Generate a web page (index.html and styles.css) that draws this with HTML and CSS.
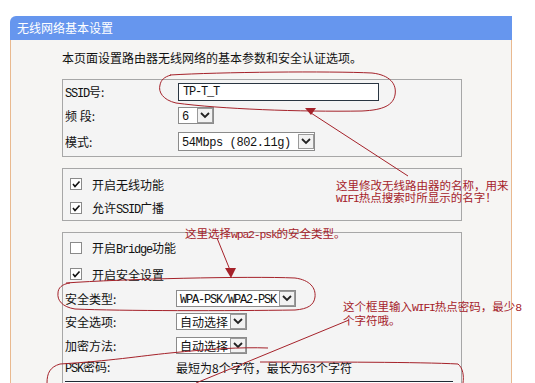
FILE: index.html
```html
<!DOCTYPE html>
<html lang="zh-CN">
<head>
<meta charset="utf-8">
<title>无线网络基本设置</title>
<link rel="stylesheet" href="styles.css">
</head>
<body>
<div class="page">
  <div class="panel">
    <div class="head">无线网络基本设置</div>
    <div class="body">
      <p class="intro">本页面设置路由器无线网络的基本参数和安全认证选项。</p>

      <div class="box b1">
        <div class="row h20">
          <span class="lbl"><span class="m">SSID</span>号:</span>
          <span class="input ssid"><span class="m">TP-T_T</span></span>
        </div>
        <div class="row h26">
          <span class="lbl">频 段:</span>
          <span class="sel w36"><span class="val"><span class="m">6</span></span><span class="btn"><svg viewBox="0 0 10 8" width="10" height="8"><path d="M1 2 L5 6 L9 2" fill="none" stroke="#222" stroke-width="1.8"/></svg></span></span>
        </div>
        <div class="row h26">
          <span class="lbl">模式:</span>
          <span class="sel w137 tall"><span class="val"><span class="m wide">54Mbps (802.11g)</span></span><span class="btn"><svg viewBox="0 0 10 8" width="10" height="8"><path d="M1 2 L5 6 L9 2" fill="none" stroke="#222" stroke-width="1.8"/></svg></span></span>
        </div>
      </div>

      <div class="box b2">
        <div class="row h24 chk">
          <span class="cb on"><svg viewBox="0 0 10 10" width="10" height="10"><path d="M2 5 L4 7.5 L8.5 2.5" fill="none" stroke="#111" stroke-width="1.6"/></svg></span>
          <span>开启无线功能</span>
        </div>
        <div class="row h24 chk">
          <span class="cb on"><svg viewBox="0 0 10 10" width="10" height="10"><path d="M2 5 L4 7.5 L8.5 2.5" fill="none" stroke="#111" stroke-width="1.6"/></svg></span>
          <span>允许<span class="m">SSID</span>广播</span>
        </div>
      </div>

      <div class="box b3">
        <div class="row h24 chk">
          <span class="cb"></span>
          <span>开启<span class="m">Bridge</span>功能</span>
        </div>
        <div class="row h28 chk">
          <span class="cb on"><svg viewBox="0 0 10 10" width="10" height="10"><path d="M2 5 L4 7.5 L8.5 2.5" fill="none" stroke="#111" stroke-width="1.6"/></svg></span>
          <span>开启安全设置</span>
        </div>
        <div class="row h20">
          <span class="lbl l2">安全类型:</span>
          <span class="sel w120"><span class="val"><span class="m">WPA-PSK/WPA2-PSK</span></span><span class="btn"><svg viewBox="0 0 10 8" width="10" height="8"><path d="M1 2 L5 6 L9 2" fill="none" stroke="#222" stroke-width="1.8"/></svg></span></span>
        </div>
        <div class="row h26">
          <span class="lbl l2">安全选项:</span>
          <span class="sel w71"><span class="val">自动选择</span><span class="btn"><svg viewBox="0 0 10 8" width="10" height="8"><path d="M1 2 L5 6 L9 2" fill="none" stroke="#222" stroke-width="1.8"/></svg></span></span>
        </div>
        <div class="row h22">
          <span class="lbl l2">加密方法:</span>
          <span class="sel w71"><span class="val">自动选择</span><span class="btn"><svg viewBox="0 0 10 8" width="10" height="8"><path d="M1 2 L5 6 L9 2" fill="none" stroke="#222" stroke-width="1.8"/></svg></span></span>
        </div>
        <div class="row h22">
          <span class="lbl l2"><span class="m">PSK</span>密码:</span>
          <span class="hint">最短为8个字符，最长为63个字符</span>
        </div>
        <div class="psk"></div>
      </div>
    </div>
  </div>

  <svg class="ink" viewBox="0 0 535 383" width="535" height="383">
    <g fill="none" stroke="#a5222a" stroke-width="1">
      <path d="M170 75 C 220 72, 330 71, 372 73 C 390 75, 397 84, 395 95 C 393 105, 384 110, 362 111 C 300 112, 220 109, 176 103 C 163 100, 158 92, 160 85 C 161 80, 164 77, 171 75"/>
      <path d="M311 113 L 408 176"/>
      <path d="M217 238 L 230 270"/>
      <path d="M66 283 C 120 279, 250 276, 295 278 C 310 280, 316 288, 315 297 C 314 305, 308 309, 295 310 C 230 311, 120 311, 75 309 C 62 307, 57 300, 58 293 C 58 288, 62 284, 70 283"/>
      <path d="M349 320 L 196 383"/>
      <path d="M47 383 C 47 373, 50 367, 60 364 C 110 361, 140 356, 170 353 C 210 349, 240 347, 268 348"/>
      <path d="M260 362 C 330 362, 420 362, 458 364 C 463 368, 464 376, 463 383"/>
    </g>
    <g fill="#a5222a">
      <polygon points="305,108 316,108 311,115"/>
      <polygon points="225,268 236,268 231,278"/>
    </g>
  </svg>

  <div class="note n1">这里修改无线路由器的名称，用来<br><span class="m">WIFI</span>热点搜索时所显示的名字！</div>
  <div class="note n2">这里选择<span class="m">wpa2-psk</span>的安全类型。</div>
  <div class="note n3">这个框里输入<span class="m">WIFI</span>热点密码，最少<span class="m">8</span><br>个字符哦。</div>
</div>
</body>
</html>
```

FILE: styles.css
```css
html, body {
  margin: 0;
  padding: 0;
  background: #ffffff;
  overflow: hidden;
}

body {
  font-family: "Noto Sans CJK SC", "Liberation Sans", sans-serif;
  font-size: 12px;
  color: #111;
}

.page {
  position: relative;
  width: 535px;
  height: 383px;
  overflow: hidden;
}

.m {
  font-family: "Liberation Mono", "Noto Sans CJK SC", monospace;
  letter-spacing: -1.2px;
}

.m.wide {
  letter-spacing: -0.4px;
}

.panel {
  margin: 16px 0 0 10px;
  width: 502px;
}

.head {
  height: 24px;
  line-height: 24px;
  padding-left: 7px;
  background: #6696ee;
  color: #ffffff;
  border-top-left-radius: 6px;
  font-size: 12px;
}

.body {
  background: #f6f5f3;
  border-left: 1px solid #e9b98f;
  border-right: 1px solid #e9b98f;
  padding: 0 51px 40px 51px;
  height: 400px;
}

.intro {
  margin: 0;
  padding-top: 10px;
  line-height: 16px;
  height: 16px;
  margin-bottom: 13px;
}

.box {
  border: 1px solid #a7a7a7;
  background: #f4f4f4;
  width: 396px;
  padding-left: 2px;
}

.b1 {
  padding-top: 2px;
  padding-bottom: 2px;
}

.b2 {
  margin-top: 11px;
  padding-top: 3px;
}

.b3 {
  margin-top: 11px;
  padding-top: 3px;
}

.row {
  display: flex;
  align-items: center;
}

.h20 { height: 20px; }
.h22 { height: 22px; }
.h24 { height: 24px; }
.h26 { height: 26px; }
.h28 { height: 28px; }

.lbl {
  width: 113px;
  flex: none;
}

.lbl.l2 {
  width: 111px;
}

.input {
  display: flex;
  align-items: center;
  box-sizing: border-box;
  height: 18px;
  border: 1px solid #2a3642;
  background: #ffffff;
  padding-left: 4px;
}

.ssid {
  width: 201px;
}

.sel {
  display: flex;
  align-items: center;
  box-sizing: border-box;
  height: 17px;
  border: 1px solid #8b8b8b;
  background: #ffffff;
}

.sel.tall {
  height: 19px;
}

.sel .val {
  flex: 1;
  padding-left: 3px;
  white-space: nowrap;
  overflow: hidden;
}

.sel .btn {
  flex: none;
  box-sizing: border-box;
  width: 16px;
  height: 15px;
  border: 1px solid #9a9a9a;
  background: #f2f2f2;
  display: flex;
  align-items: center;
  justify-content: center;
}

.w36 { width: 36px; }
.w137 { width: 137px; }
.w120 { width: 120px; }
.w71 { width: 71px; }

.chk {
  padding-left: 5px;
}

.cb {
  box-sizing: border-box;
  width: 12px;
  height: 12px;
  border: 1px solid #8a8a8a;
  background: #ffffff;
  display: flex;
  align-items: center;
  justify-content: center;
  margin-right: 10px;
  flex: none;
}

.hint {
  white-space: nowrap;
}

.psk {
  margin-top: 3px;
  width: 388px;
  height: 18px;
  border-top: 1px solid #1f2a34;
  background: #ffffff;
}

.ink {
  position: absolute;
  left: 0;
  top: 0;
  pointer-events: none;
}

.note {
  position: absolute;
  color: #a5222a;
  font-size: 11.5px;
  line-height: 12px;
  white-space: nowrap;
}

.n1 { left: 336px; top: 179px; }
.n2 { left: 185px; top: 227px; }
.n3 { left: 343px; top: 300px; }
```
